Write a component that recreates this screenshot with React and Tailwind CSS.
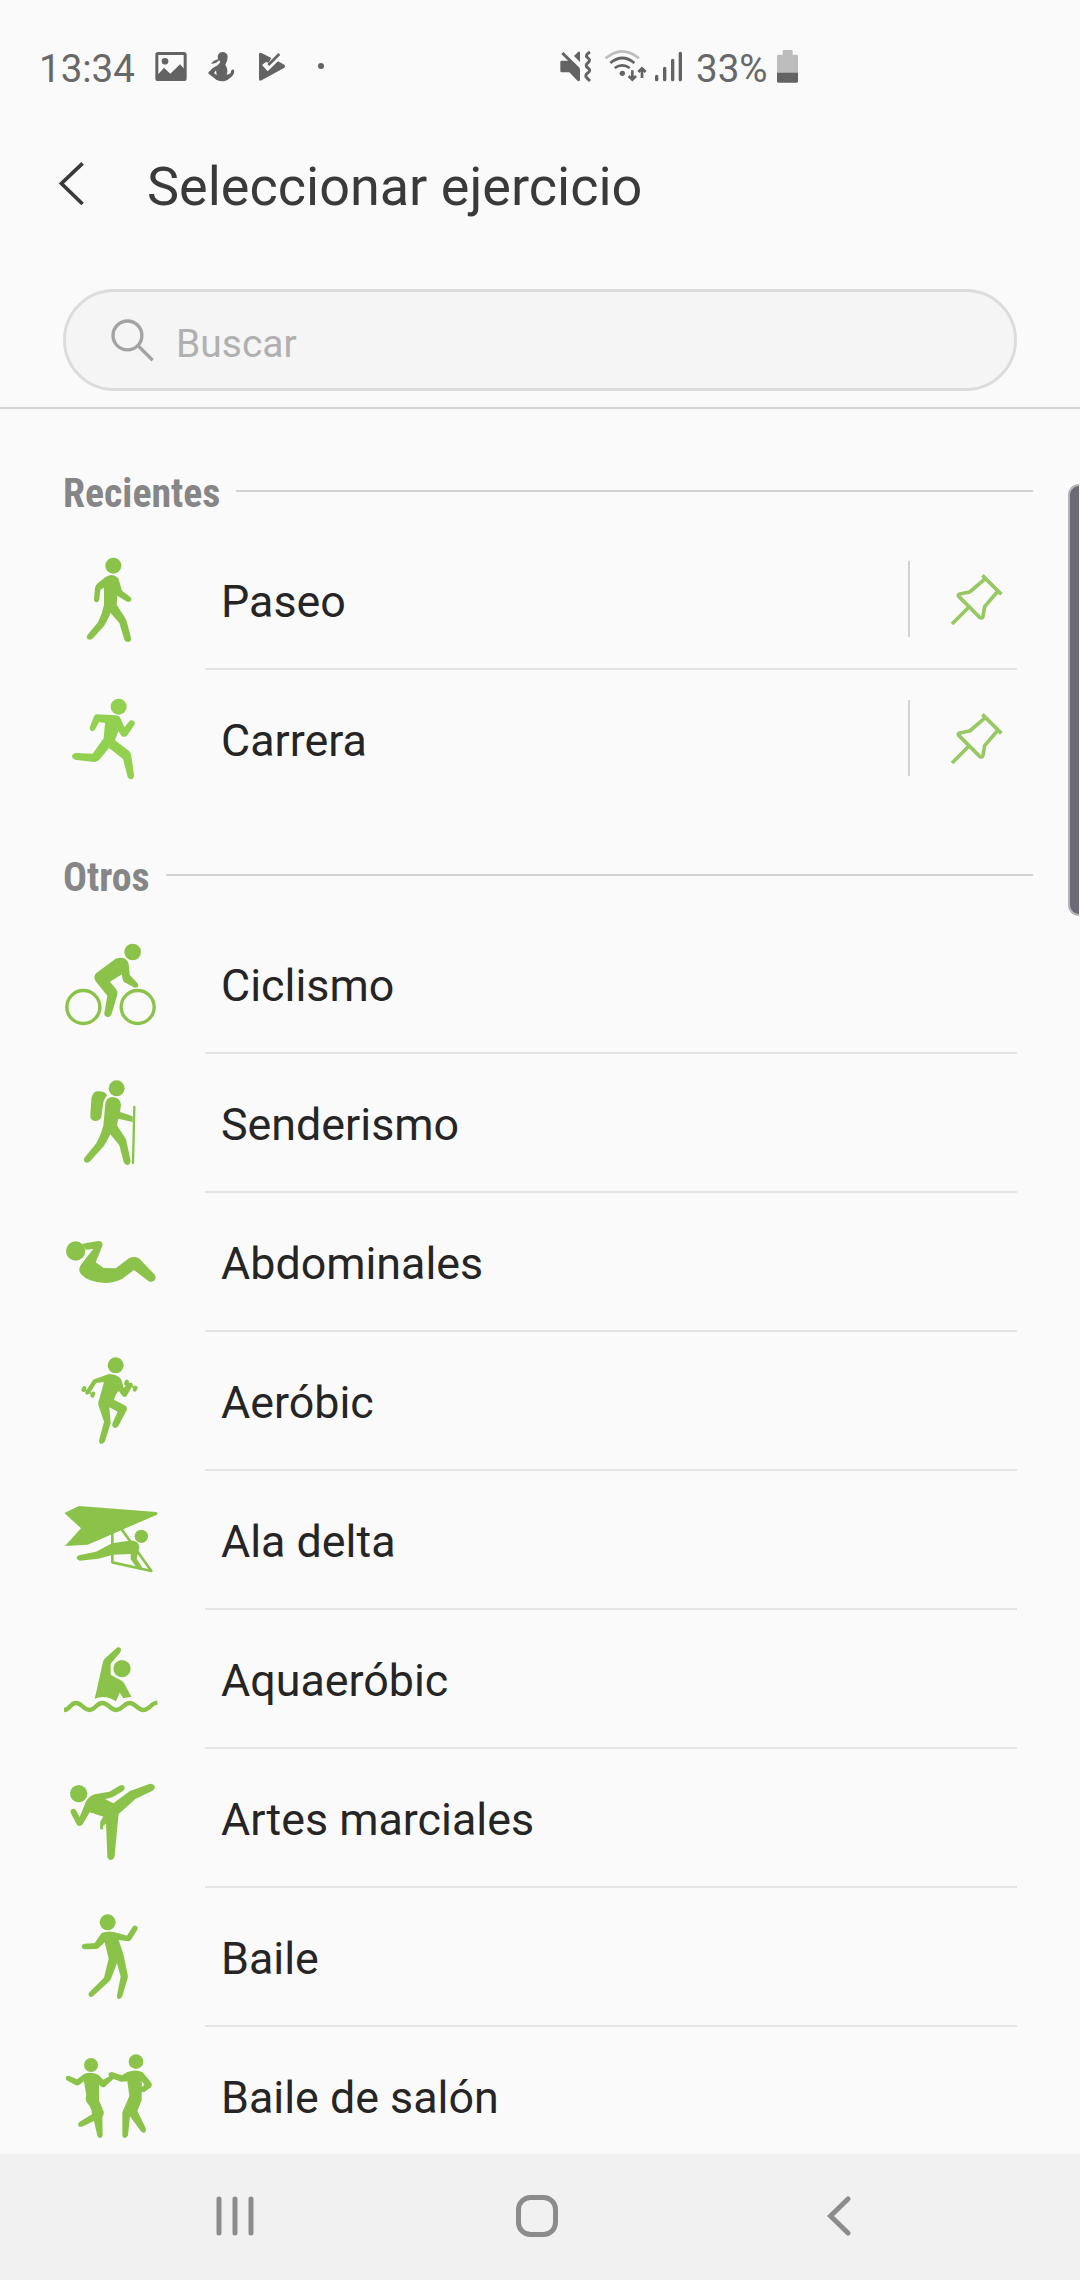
const GREEN = "#8bc34a";

// Every activity icon fills a 130x139 cell, drawn at three units per pixel.
function Icon({ box, color = GREEN, children }) {
  return (
    <svg
      viewBox={box}
      className="h-[139px] w-[130px] shrink-0"
      fill={color}
      stroke={color}
      strokeWidth="0"
      strokeLinecap="round"
      strokeLinejoin="round"
    >
      {children}
    </svg>
  );
}

const WalkIcon = () => (
  <Icon box="0 -27 390 417">
    <circle cx="190" cy="77" r="24" />
    <path d="M164 113 Q186 96 205 115 L216 152 L240 170 Q247 176 242 183 Q237 188 229 184 L202 167 L200 194 L225 233 Q230 240 232 251 L243 294 Q244 304 236 306 Q227 307 223 299 L208 249 L182 219 Q172 243 162 258 L129 295 Q122 302 114 298 Q107 292 113 284 L144 247 Q156 224 162 194 L162 143 L151 149 L148 179 Q145 187 139 187 Q131 185 132 176 L135 143 Q136 136 143 130 Z" />
  </Icon>
);

const RunIcon = () => (
  <Icon box="0 390 390 417" color="#92d050">
    <circle cx="206" cy="500" r="24" />
    <path d="M141 523 L199 526 Q209 528 213 538 L223 562 L237 545 Q242 538 250 542 Q257 548 253 555 L232 586 Q225 594 215 588 L205 574 L195 601 L237 633 Q243 638 244 648 L252 704 Q252 716 244 718 Q236 718 233 711 L219 657 L177 624 L149 658 Q142 667 132 666 L75 659 Q66 656 66 649 Q67 641 76 639 L128 641 L161 595 L165 549 L147 546 L136 567 Q131 575 124 573 Q117 569 120 560 L132 529 Q135 523 141 523 Z" />
  </Icon>
);

const BikeIcon = () => (
  <Icon box="30 225 390 417">
    <circle cx="278" cy="336" r="25" />
    <circle cx="130" cy="501" r="49.500" fill="none" strokeWidth="10" />
    <circle cx="293" cy="501" r="49.500" fill="none" strokeWidth="10" />
    <path d="M227 356 Q258 346 266 371 L269 404 L291 428 Q298 435 293 441 Q288 445 281 442 L251 425 Q247 421 246 403 L210 425 L228 447 Q233 454 232 464 L215 521 Q211 531 202 531 Q192 529 193 519 L202 467 L167 424 Q158 412 168 400 Z" />
  </Icon>
);

const HikeIcon = () => (
  <Icon box="30 642 390 417">
    <circle cx="230" cy="745" r="24" />
    <path d="M171 754 Q196 752 201 767 Q191 777 189 794 L184 831 Q180 843 165 843 Q150 842 151 826 L154 777 Q157 757 171 754 Z" />
    <path d="M196 792 Q198 771 219 771 Q241 773 243 795 L240 816 L278 829 V846 L235 836 L231 856 L258 898 L272 962 Q271 974 262 975 Q254 974 251 966 L238 916 L211 883 Q201 905 191 919 L151 963 Q143 972 134 966 Q129 959 135 951 L168 911 Q183 885 190 857 Z" />
    <path d="M283 801 L279 969" fill="none" strokeWidth="7" />
  </Icon>
);

const SitUpIcon = () => (
  <Icon box="0 -51 390 417">
    <circle cx="77" cy="123" r="29" />
    <path d="M97 101 L145 93 Q158 93 158 106 L137 157 L161 174 L197 175 L237 145 Q251 137 267 145 L313 193 Q320 203 314 211 Q304 219 295 213 L252 180 L216 207 Q169 229 119 210 Q103 204 92 191 Q83 178 93 164 L116 134 L130 117 L107 119 Z" />
  </Icon>
);

const AerobicIcon = () => (
  <Icon box="0 366 390 417">
    <circle cx="197" cy="466" r="24" />
    <path d="M137 506 L177 492 Q203 493 214 509 L221 534 L234 521 Q239 515 245 519 Q251 522 247 528 L230 558 Q223 565 217 557 L206 543 Q194 555 192 569 L224 586 Q233 591 230 601 L205 648 Q198 658 189 652 Q184 646 188 638 L203 605 L178 592 L182 639 L165 694 Q161 703 152 702 Q145 697 148 688 L162 635 L145 585 Q144 574 148 566 L162 516 L139 519 L119 550 Q113 557 107 553 Q104 549 107 544 L129 510 Q132 507 137 506 Z" />
    <path d="M103 534 L100 540 M130 551 L127 557 M231 515 L228 521 M257 533 L254 539" fill="none" strokeWidth="12" />
    <path d="M104 539 L126 552 M232 520 L253 533" fill="none" strokeWidth="5" />
  </Icon>
);

const HangGliderIcon = () => (
  <Icon box="0 -27 390 417">
    <path d="M43 99 L87 78 L319 96 Q326 101 319 105 L113 194 L45 198 L93 145 Z" />
    <circle cx="274" cy="169" r="20" />
    <path d="M138 215 L186 190 L237 182 Q266 179 268 202 L260 236 L277 263 L261 264 L242 238 L242 222 L190 224 L145 236 L90 242 Q79 239 80 232 Q82 226 90 225 Z" />
    <path d="M187 160 V247 L304 273 L216 149" fill="none" strokeWidth="8" />
  </Icon>
);

const AquaIcon = () => (
  <Icon box="0 390 390 417">
    <circle cx="216" cy="566" r="26" />
    <path d="M134 657 L159 545 Q160 540 164 536 L197 506 Q205 498 212 505 Q216 511 210 518 L182 551 V584 L215 602 Q221 606 224 613 L244 650 L220 655 L209 638 L198 664 Q164 642 134 657 Z" />
    <path
      d="M42 690 C60 690 60 669 78 669 S100 690 118 690 S139 669 157 669 S181 690 199 690 S221 669 239 669 S261 690 280 690 S302 669 322 668"
      fill="none"
      strokeWidth="13"
      strokeLinecap="butt"
    />
  </Icon>
);

const MartialIcon = () => (
  <Icon box="0 -33 390 417">
    <circle cx="86" cy="101" r="26" />
    <path d="M134 103 L178 95 L211 76 Q220 72 224 80 Q226 88 219 93 L187 112 Q174 116 165 117 L190 130 L240 93 L298 72 Q310 69 314 79 Q316 88 306 93 L256 117 L206 162 L202 200 L194 288 Q192 299 183 300 Q173 299 172 290 L168 188 L163 188 V171 L119 157 L98 193 Q90 202 81 195 L62 158 Q60 150 67 147 Q74 145 78 151 L89 171 L106 129 Q114 109 134 103 Z" />
    <path d="M165 170 L155 187 V208 M172 180 L158 194" fill="none" strokeWidth="9" strokeLinecap="butt" />
  </Icon>
);

const DanceIcon = () => (
  <Icon box="0 384 390 417">
    <circle cx="173" cy="487" r="24" />
    <path d="M155 519 Q175 510 203 519 L231 527 L248 500 Q254 494 260 498 Q266 503 262 509 L243 539 Q240 544 232 544 L206 540 L221 586 L233 645 Q235 651 232 658 L217 708 Q213 719 205 717 Q200 715 201 706 L212 650 L201 610 L183 656 Q182 660 178 664 L129 709 Q122 713 117 708 Q113 702 118 697 L162 653 L176 596 L164 547 L147 563 Q143 567 137 567 L103 568 Q95 566 95 559 Q96 552 104 551 L134 549 Z" />
  </Icon>
);

const BallroomIcon = () => (
  <Icon box="0 -9 390 417">
    <circle cx="123" cy="105" r="21" />
    <circle cx="258" cy="95" r="22" />
    <path d="M102 132 Q123 124 145 134 L160 149 L178 139 L175 133 Q177 126 186 126 L216 136 L232 126 Q258 116 278 127 L304 158 Q308 165 303 172 L282 187 L275 185 L275 210 L262 243 L287 294 Q290 303 284 308 Q277 310 272 303 L240 259 L234 316 Q231 324 225 324 Q217 323 217 315 L217 247 L238 198 L232 154 L214 155 L190 147 L164 171 Q160 173 155 170 L147 165 V211 L160 242 Q164 251 157 261 L158 315 Q157 323 151 324 Q144 324 142 317 L132 273 L96 290 Q89 292 85 287 Q83 280 88 276 L126 253 Q125 238 119 229 L109 215 Q105 207 109 196 L102 154 L88 164 Q82 168 76 165 L50 151 Q45 146 48 140 Q52 136 58 138 L81 148 Z" />
    <path d="M275 153 L283 164 L276 171 Z" fill="#fafafa" />
  </Icon>
);

function Pin() {
  return (
    <svg
      viewBox="180 183 321 411"
      className="h-[137px] w-[107px]"
      fill="none"
      stroke="#97c862"
      strokeWidth="11"
      strokeLinejoin="round"
    >
      <path d="M397 316 L454 373 M406 326 L359 366 L329 372 Q322 375 327 380 L389 442 Q397 447 399 439 L404 410 L444 363 M357 411 L306 462" />
    </svg>
  );
}

const recientes = [
  { name: "Paseo", icon: <WalkIcon /> },
  { name: "Carrera", icon: <RunIcon /> },
];

const otros = [
  { name: "Ciclismo", icon: <BikeIcon /> },
  { name: "Senderismo", icon: <HikeIcon /> },
  { name: "Abdominales", icon: <SitUpIcon /> },
  { name: "Aeróbic", icon: <AerobicIcon /> },
  { name: "Ala delta", icon: <HangGliderIcon /> },
  { name: "Aquaeróbic", icon: <AquaIcon /> },
  { name: "Artes marciales", icon: <MartialIcon /> },
  { name: "Baile", icon: <DanceIcon /> },
  { name: "Baile de salón", icon: <BallroomIcon /> },
];

function Row({ name, icon, pinned, last }) {
  return (
    <li className="flex h-[139px] shrink-0 pl-[50px]">
      {icon}
      <div
        className={`ml-[25px] flex w-[812px] border-b-2 ${last ? "border-transparent" : "border-[#e4e4e4]"}`}
      >
        <span className="flex flex-1 items-center pt-1.5 pl-4 text-[44.8px] text-[#252525]">
          {name}
        </span>
        {pinned && (
          <>
            <div className="mt-[30px] h-[76px] w-0.5 bg-[#d2d2d2]" />
            <Pin />
          </>
        )}
      </div>
    </li>
  );
}

function SectionTitle({ children }) {
  return (
    <div className="flex h-20 items-center pr-[47px] pl-[63px]">
      <h2 className="mt-1.5 text-[39.8px] font-bold text-[#868686] [font-stretch:75%]">
        {children}
      </h2>
      <div className="ml-4 h-0.5 flex-1 bg-[#d2d2d2]" />
    </div>
  );
}

function StatusBar() {
  return (
    <div className="mt-[30px] flex h-20 shrink-0 items-center pl-[39px] text-[38.5px] text-[#686868]">
      <span className="-mt-0.5 w-[111px]">13:34</span>
      <svg viewBox="450 0 540 240" className="h-20 w-[180px]" fill="#636363" stroke="#636363" strokeWidth="0">
        <rect x="470.500" y="70.500" width="85" height="78" rx="4" fill="none" strokeWidth="9" />
        <circle cx="495" cy="94" r="10" />
        <path d="M470 138 L492 113 L511 131 L540 103 L556 120 V150 H470 Z" />
        <circle cx="668" cy="81" r="15" />
        <path d="M657 90 Q668 96 683 88 L676 104 Q686 120 680 134 Q694 133 693 123 Q695 117 702 119 Q705 131 693 142 L681 151 Q667 157 650 150 L627 132 Q622 128 630 122 Q640 112 653 106 Q660 101 661 94 Z" />
        <path d="M633 102 Q639 90 658 87 L655 94 Q647 102 633 102 Z" />
        <path d="M642 129 L648 121 L650 136 Z" fill="#fafafa" />
        <path d="M777 73 Q778 66 786 70 L814 84 L806 98 L798 96 L786 105 L803 124 L834 94 L853 104 Q858 108 853 113 L785 151 Q777 154 777 147 Z" />
        <path d="M792 104 L804 116 L822 96" fill="none" strokeWidth="6" stroke="#fafafa" />
        <path d="M805 105 L838 72" fill="none" strokeWidth="8" />
        <circle cx="963" cy="108" r="9" />
      </svg>
      <svg viewBox="0 0 495 240" className="ml-[200px] h-20 w-[165px]" fill="#636363" stroke="#636363" strokeWidth="0">
        <path d="M91 96 Q91 92 95 92 H123 L150 119 V151 Q147 157 141 151 L118 127 H95 Q91 127 91 123 Z" />
        <path d="M132 78 L145 65 Q150 64 150 68 V96 Z" />
        <path d="M97 69 L147 118" strokeWidth="9" />
        <path d="M180 66 Q164 75 172 82 Q184 91 174 98 Q163 107 174 114 Q184 122 174 128 Q163 137 170 143 L180 153" fill="none" strokeWidth="9" />
        <g fill="none" strokeWidth="8">
          <path d="M227 85 Q277 43 327 85" stroke="#bdbdbd" />
          <path d="M241 99 Q277 69 313 99" />
          <path d="M254 114 Q277 98 299 114" />
          <path d="M307 121 V148 M296 138 L307 149 L318 138 M336 144 V116 M325 126 L336 115 L347 126" />
          <path d="M380 139 V149 M404 115 V149 M428 91 V149 M451 70 V149" strokeWidth="10" strokeLinecap="round" />
        </g>
        <circle cx="277" cy="130" r="8" />
      </svg>
      <span className="-mt-0.5 ml-px w-[81px]">33%</span>
      <svg viewBox="741 0 63 240" className="h-20 w-[21px]">
        <path d="M741 78 Q741 74 745 74 H758 V64 Q758 60 762 60 H784 Q788 60 788 64 V74 H800 Q804 74 804 78 V130 H741 Z" fill="#bdbdbd" />
        <path d="M741 128 H804 V154 Q804 158 800 158 H745 Q741 158 741 154 Z" fill="#636363" />
      </svg>
    </div>
  );
}

export default function App() {
  return (
    <div className="relative flex h-[2280px] w-[1080px] flex-col overflow-hidden bg-[#fafafa] font-['Roboto',sans-serif] leading-none">
      <StatusBar />

      <header className="flex h-[152px] shrink-0 items-center">
        <svg viewBox="174 390 80 140" className="ml-[58px] h-[47px] w-[27px] -translate-y-[3px]" fill="none" stroke="#3a3a3a" strokeWidth="11">
          <path d="M247 400 L184 460 L247 521" />
        </svg>
        <h1 className="mt-0.5 ml-[62px] text-[54px] text-[#3a3a3a]">Seleccionar ejercicio</h1>
      </header>

      <div className="mx-[63px] mt-[27px] flex h-[102px] shrink-0 items-center rounded-full border-[3px] border-[#dcdcdc] bg-[#f5f5f5]">
        <svg viewBox="210 140 140 140" className="ml-11 h-[47px] w-[47px]" fill="none" stroke="#a3a3a3" strokeWidth="10">
          <circle cx="262" cy="195" r="43" />
          <path d="M293 225 L337 269" />
        </svg>
        <span className="mt-2 ml-[19px] text-[39px] text-[#b0b0b0]">Buscar</span>
      </div>
      <div className="mt-4 h-0.5 shrink-0 bg-[#d4d4d4]" />

      <main className="flex min-h-0 flex-1 flex-col overflow-hidden">
        <section className="mt-[42px]">
          <SectionTitle>Recientes</SectionTitle>
          <ul>
            {recientes.map((item, i) => (
              <Row key={item.name} {...item} pinned last={i === recientes.length - 1} />
            ))}
          </ul>
        </section>
        <section className="mt-[26px]">
          <SectionTitle>Otros</SectionTitle>
          <ul>
            {otros.map((item, i) => (
              <Row key={item.name} {...item} last={i === otros.length - 1} />
            ))}
          </ul>
        </section>
      </main>

      <nav className="flex h-[126px] shrink-0 items-center bg-[#f1f1f1] pl-[216px]">
        <svg viewBox="0 0 38 42" className="h-[42px] w-[38px]" stroke="#8c8c8c" strokeWidth="5" strokeLinecap="round">
          <path d="M3 3 V37 M19 3 V37 M35 3 V37" />
        </svg>
        <svg viewBox="0 0 42 42" className="ml-[262px] h-[42px] w-[42px] overflow-visible" fill="none" stroke="#8c8c8c" strokeWidth="5">
          <rect x="2.500" y="1.500" width="37" height="37" rx="12" />
        </svg>
        <svg viewBox="0 0 24 42" className="ml-[269px] h-[42px] w-6" fill="none" stroke="#8c8c8c" strokeWidth="5" strokeLinecap="round">
          <path d="M21 3 L3.500 20 L21 37" />
        </svg>
      </nav>

      {/* edge panel handle */}
      <div className="absolute top-[484px] right-px h-[432px] w-[11px] rounded-l-xl border-y-2 border-l-2 border-[#b4b4b8] bg-[#6c6a78]" />
    </div>
  );
}
